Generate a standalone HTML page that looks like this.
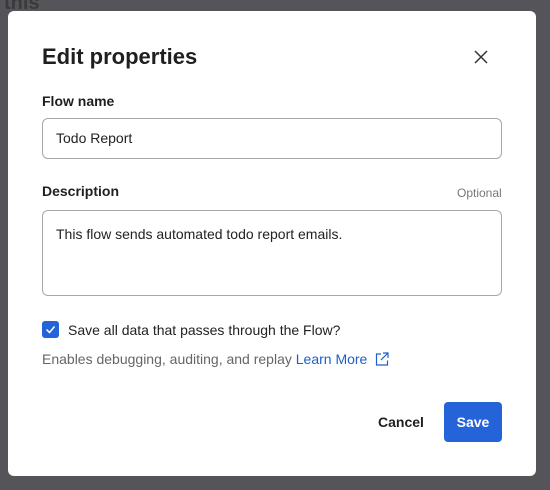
<!DOCTYPE html>
<html><head><style>
html,body{margin:0;padding:0;width:550px;height:490px;overflow:hidden;background:#555559;font-family:"Liberation Sans",sans-serif;}
.bgtext{position:absolute;left:4px;top:-8px;font-size:20px;font-weight:bold;color:#3a3a3d;}
.modal{position:absolute;left:8px;top:11px;width:528px;height:465px;background:#fff;border-radius:6px;}
.abs{position:absolute;}
h1{position:absolute;left:34px;top:33px;margin:0;font-size:22px;font-weight:bold;color:#1f1f1f;}
.label{font-size:14px;font-weight:bold;color:#1f1f1f;}
.input{position:absolute;left:34px;width:460px;border:1px solid #a8a8a8;border-radius:6px;box-sizing:border-box;font-size:14px;color:#222;padding-left:13px;}
</style></head><body>
<div class="bgtext">this</div>
<div class="modal">
<h1>Edit properties</h1>
<svg class="abs" style="left:465px;top:38px" width="16" height="16" viewBox="0 0 16 16"><path d="M2 2L14 14M14 2L2 14" stroke="#333" stroke-width="1.5"/></svg>
<div class="abs label" style="left:34px;top:82px">Flow name</div>
<div class="input" style="top:107px;height:41px;line-height:39px">Todo Report</div>
<div class="abs label" style="left:34px;top:172px">Description</div>
<div class="abs" style="left:449px;top:175px;font-size:12px;color:#777">Optional</div>
<div class="input" style="top:199px;height:86px;padding-top:15px">This flow sends automated todo report emails.</div>
<div class="abs" style="left:34px;top:310px;width:17px;height:17px;background:#2563d9;border-radius:3px"><svg width="17" height="17" viewBox="0 0 17 17"><path d="M4.5 8.5L7.5 11.5L12.5 5.5" stroke="#fff" stroke-width="1.5" fill="none"/></svg></div>
<div class="abs" style="left:60px;top:311px;font-size:14px;color:#222">Save all data that passes through the Flow?</div>
<div class="abs" style="left:34px;top:340px;font-size:14px;color:#666">Enables debugging, auditing, and replay <span style="color:#1f5fc9">Learn More</span></div>
<svg class="abs" style="left:366px;top:340px" width="16" height="16" viewBox="0 0 16 16"><path d="M7 3H2.5V14H13.5V9.5M9 2H14V7M14 2L7 9" stroke="#1f5fc9" stroke-width="1.2" fill="none"/></svg>
<div class="abs" style="left:370px;top:403px;font-size:14px;font-weight:bold;color:#1f1f1f">Cancel</div>
<div class="abs" style="left:436px;top:391px;width:58px;height:40px;background:#2563d9;border-radius:4px;color:#fff;font-size:14px;font-weight:bold;text-align:center;line-height:40px">Save</div>
</div>
</body></html>
